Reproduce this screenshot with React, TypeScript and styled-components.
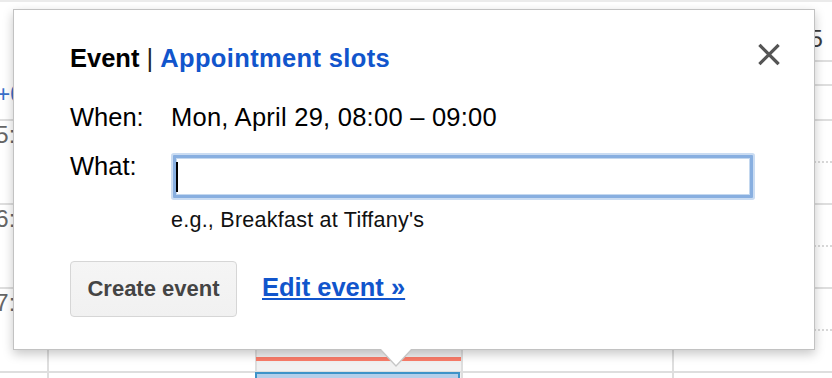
import React from 'react'
import styled, { createGlobalStyle } from 'styled-components'

const GlobalStyle = createGlobalStyle`
  *, *::before, *::after {
    box-sizing: border-box;
  }

  html,
  body {
    margin: 0;
    padding: 0;
  }

  body {
    width: 832px;
    height: 378px;
    overflow: hidden;
    background: #fff;
    font-family: 'Liberation Sans', Arial, Helvetica, sans-serif;
  }
`

const days = ['Sun 4/28', 'Mon 4/29', 'Tue 4/30', 'Sun 5/5']
const hours = ['05:00', '06:00', '07:00', '08:00']

const CloseIcon = () => (
  <svg width="22" height="23" viewBox="0 0 22 23" aria-hidden="true">
    <path d="M2.5 3 L19.5 20 M19.5 3 L2.5 20" stroke="#555" strokeWidth="3.2" strokeLinecap="square" />
  </svg>
)

const App = () => {
  return (
    <Page>
      <GlobalStyle />
      <TopStrip />
      <Calendar>
        <Gutter>
          <GutterTop>
            <GutterLabel $blue>GMT+02</GutterLabel>
          </GutterTop>
          {hours.map((h) => (
            <GutterHour key={h}>
              <GutterLabel>{h}</GutterLabel>
            </GutterHour>
          ))}
        </Gutter>

        {days.map((day, i) => (
          <DayColumn key={day}>
            <DayHeader>{day}</DayHeader>
            <DayBody $today={i === 1}>
              <AllDayRow />
              <PartialRow />
              {Array.from({ length: 7 }).map((_, j) => (
                <HalfHour key={j} $dotted={j % 2 === 0} />
              ))}
              {i === 1 && (
                <>
                  <NowLine />
                  <EventBlock />
                </>
              )}
            </DayBody>
          </DayColumn>
        ))}
      </Calendar>

      <Bubble>
        <BubbleHeader>
          <Title>
            <strong>Event</strong>
            <Divider> | </Divider>
            <TabLink href="#">Appointment slots</TabLink>
          </Title>
          <CloseButton aria-label="Close">
            <CloseIcon />
          </CloseButton>
        </BubbleHeader>

        <Field $gap={29}>
          <Label>When:</Label>
          <Value>Mon, April 29, 08:00 – 09:00</Value>
        </Field>

        <Field $gap={19}>
          <Label>What:</Label>
          <div>
            <InputWrap>
              <TextInput type="text" />
              <Caret />
            </InputWrap>
            <Hint>e.g., Breakfast at Tiffany's</Hint>
          </div>
        </Field>

        <Actions>
          <CreateButton>Create event</CreateButton>
          <EditLink href="#">Edit event »</EditLink>
        </Actions>
      </Bubble>
    </Page>
  )
}

export default App

const Page = styled.div`
  position: relative;
  width: 832px;
  height: 378px;
  overflow: hidden;
`

const TopStrip = styled.div`
  height: 2px;
  background: #ebebeb;
`

const Calendar = styled.div`
  display: grid;
  grid-template-columns: 47px 208px 206px 211px 200px;
`

const Gutter = styled.div`
  display: flex;
  flex-direction: column;
`

const GutterTop = styled.div`
  height: 119px;
  padding-bottom: 12px;
  border-bottom: 2px solid #dedede;
  display: flex;
  flex-direction: column;
  justify-content: flex-end;
`

const GutterHour = styled.div`
  height: 84px;
  border-bottom: 2px solid #dedede;
`

const GutterLabel = styled.div<{ $blue?: boolean }>`
  display: flex;
  justify-content: flex-end;
  padding-right: ${({ $blue }) => ($blue ? '10px' : '5px')};
  font-size: 24px;
  line-height: ${({ $blue }) => ($blue ? '26px' : '28px')};
  white-space: nowrap;
  color: ${({ $blue }) => ($blue ? '#3a6fc9' : '#666')};
`

const DayColumn = styled.div`
  display: flex;
  flex-direction: column;
`

const DayHeader = styled.div`
  height: 60px;
  padding: 23px 0 0 68px;
  border-bottom: 2px solid #dedede;
  font-size: 24px;
  line-height: 28px;
  white-space: nowrap;
  color: #3c3c3c;
`

const DayBody = styled.div<{ $today?: boolean }>`
  position: relative;
  display: flex;
  flex-direction: column;
  border-left: 2px solid #dedede;
  background: ${({ $today }) => ($today ? '#f1f1f1' : '#fff')};
`

const AllDayRow = styled.div`
  height: 24px;
  border-bottom: 2px solid #dedede;
`

const PartialRow = styled.div`
  height: 35px;
  border-bottom: 2px solid #dedede;
`

const HalfHour = styled.div<{ $dotted?: boolean }>`
  height: 42px;
  flex-shrink: 0;
  border-bottom: 2px ${({ $dotted }) => ($dotted ? 'dotted #d8d8d8' : 'solid #dedede')};
`

const NowLine = styled.div`
  position: absolute;
  top: 295px;
  left: -1px;
  right: 0;
  height: 4px;
  background: #fa7c69;
`

const EventBlock = styled.div`
  position: absolute;
  top: 310px;
  left: -2px;
  width: 205px;
  height: 60px;
  background: #b4cfea;
  border: 2px solid #3e93c8;
`

const Bubble = styled.div`
  position: absolute;
  top: 9px;
  left: 13px;
  width: 802px;
  padding: 33px 34px 32px 56px;
  background: #fff;
  border: 1px solid #c2c2c2;
  box-shadow: 0 4px 10px rgba(0, 0, 0, 0.22);
  color: #000;

  &::before,
  &::after {
    content: '';
    position: absolute;
    width: 0;
    height: 0;
  }

  &::before {
    top: calc(100% + 1px);
    left: 366px;
    border-left: 16px solid transparent;
    border-right: 16px solid transparent;
    border-top: 17px solid #c6c6c6;
  }

  &::after {
    top: 100%;
    left: 367px;
    border-left: 15px solid transparent;
    border-right: 15px solid transparent;
    border-top: 16px solid #fff;
  }
`

const BubbleHeader = styled.div`
  display: flex;
  justify-content: space-between;
  align-items: flex-start;
`

const Title = styled.div`
  font-size: 25.5px;
  line-height: 30px;
  font-weight: bold;
  white-space: nowrap;
`

const Divider = styled.span`
  font-weight: normal;
  color: #222;
`

const TabLink = styled.a`
  color: #1155cc;
  text-decoration: none;
  letter-spacing: 0.35px;
`

const CloseButton = styled.button`
  display: flex;
  width: 22px;
  height: 23px;
  padding: 0;
  border: 0;
  background: none;
  cursor: pointer;
`

const Field = styled.div<{ $gap: number }>`
  display: grid;
  grid-template-columns: 101px auto;
  align-items: start;
  margin-top: ${({ $gap }) => $gap}px;
`

const Label = styled.div`
  font-size: 25.5px;
  line-height: 30px;
`

const Value = styled.div`
  font-size: 25.5px;
  line-height: 30px;
  letter-spacing: 0.25px;
  white-space: nowrap;
`

const InputWrap = styled.div`
  position: relative;
  width: 580px;
  margin: 4px 0 0 2px;
`

const TextInput = styled.input`
  display: block;
  width: 100%;
  height: 43px;
  padding: 0 5px;
  border: 3px solid #88afe0;
  border-radius: 1px;
  box-shadow: 0 0 0 2px #cadcf2, inset 0 0 0 1px #c4d8ef;
  outline: none;
  background: #fff;
  font: 24px 'Liberation Sans', Arial, sans-serif;
  caret-color: transparent;
`

const Caret = styled.span`
  position: absolute;
  top: 7px;
  left: 3px;
  width: 2px;
  height: 30px;
  background: #000;
`

const Hint = styled.div`
  margin-top: 9.5px;
  font-size: 21.5px;
  line-height: 24px;
  letter-spacing: 0.25px;
  white-space: nowrap;
  color: #111;
`

const Actions = styled.div`
  display: flex;
  align-items: baseline;
  gap: 25px;
  margin-top: 29.5px;
`

const CreateButton = styled.button`
  display: inline-flex;
  align-items: center;
  justify-content: center;
  width: 167px;
  height: 56px;
  padding: 0;
  border: 1px solid #d6d6d6;
  border-radius: 4px;
  background: linear-gradient(#f5f5f5, #f1f1f1);
  color: #444;
  font: bold 22px/26px 'Liberation Sans', Arial, sans-serif;
  cursor: pointer;
`

const EditLink = styled.a`
  font-size: 25.5px;
  line-height: 30px;
  font-weight: bold;
  color: #1155cc;
  text-decoration: underline;
  text-decoration-thickness: 2px;
  text-underline-offset: 2px;
`
